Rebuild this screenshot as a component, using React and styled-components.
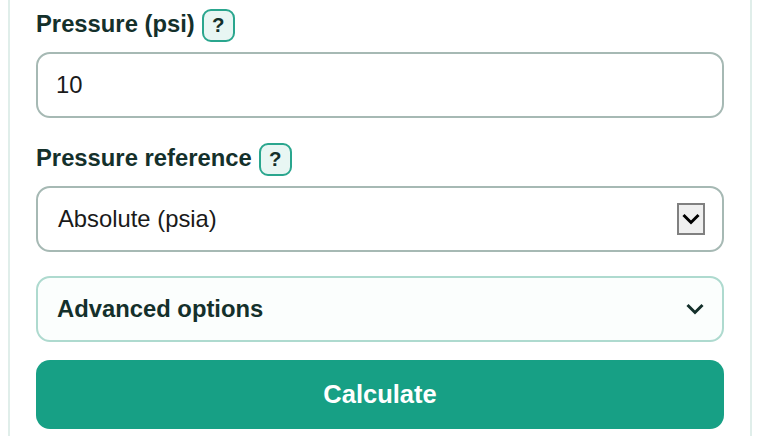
import React from "react";
import styled, { createGlobalStyle } from "styled-components";

const Global = createGlobalStyle`
  html, body { margin: 0; padding: 0; background: #fff; overflow: hidden; }
  body { font-family: "Liberation Sans", Arial, sans-serif; color: #14302b; }
`;
const Page = styled.div`
  width: 760px; height: 436px; padding: 0 8px; box-sizing: border-box; overflow: hidden;
`;
const Card = styled.div`
  height: 436px; box-sizing: border-box;
  border-left: 2px solid #e0eeea; border-right: 2px solid #e0eeea;
  padding: 9px 26px 0; display: flex; flex-direction: column;
`;
const Label = styled.div`
  display: flex; align-items: flex-start; gap: 7px; height: 33px; line-height: 29px;
  font-size: 23.8px; font-weight: 700; color: #14302b;
  margin-bottom: ${p => p.$mb}px;
`;
const Help = styled.span`
  width: 33px; height: 33px; box-sizing: border-box;
  border: 2px solid #2aa68e; border-radius: 9px; background: #e8f6f3;
  display: flex; align-items: center; justify-content: center;
  font-size: 20.4px; font-weight: 700; color: #14302b;
`;
const Field = styled.div`
  height: 66px; box-sizing: border-box; border: 2px solid #a6b9b4; border-radius: 14px;
  background: #fff; display: flex; align-items: center; justify-content: space-between;
  font-size: 23.8px; color: #1a1a1a; padding: 0 17px 0 ${p => p.$pl}px;
  margin-bottom: ${p => p.$mb}px;
`;
const NativeArrow = styled.span`
  width: 28px; height: 32px; box-sizing: border-box; border: 2px solid #808080;
  background: #efefef; display: flex; align-items: center; justify-content: center;
`;
const Advanced = styled.div`
  height: 66px; box-sizing: border-box; border: 2px solid #aedacf; border-radius: 14px;
  background: #fbfefd; display: flex; align-items: center; justify-content: space-between;
  padding: 0 18px 0 19px; font-size: 23.8px; font-weight: 700; color: #14302b;
  margin-bottom: 18px;
`;
const Submit = styled.div`
  height: 69px; border-radius: 14px; background: #17a085; color: #fff;
  display: flex; align-items: center; justify-content: center;
  font-size: 25.5px; font-weight: 700;
`;
const Chevron = ({ color }) => (
  <svg width="18" height="12" viewBox="0 0 18 12" fill="none">
    <path d="M1.5 2l7.5 7.5L16.5 2" stroke={color} strokeWidth="3" />
  </svg>
);
export default function App() {
  return (
    <Page>
      <Global />
      <Card>
        <Label $mb={10}>Pressure (psi) <Help>?</Help></Label>
        <Field $pl={18} $mb={25}>10</Field>
        <Label $mb={10}>Pressure reference <Help>?</Help></Label>
        <Field $pl={20} $mb={24}>
          Absolute (psia)
          <NativeArrow><Chevron color="#000" /></NativeArrow>
        </Field>
        <Advanced>Advanced options <Chevron color="#14302b" /></Advanced>
        <Submit>Calculate</Submit>
      </Card>
    </Page>
  );
}
